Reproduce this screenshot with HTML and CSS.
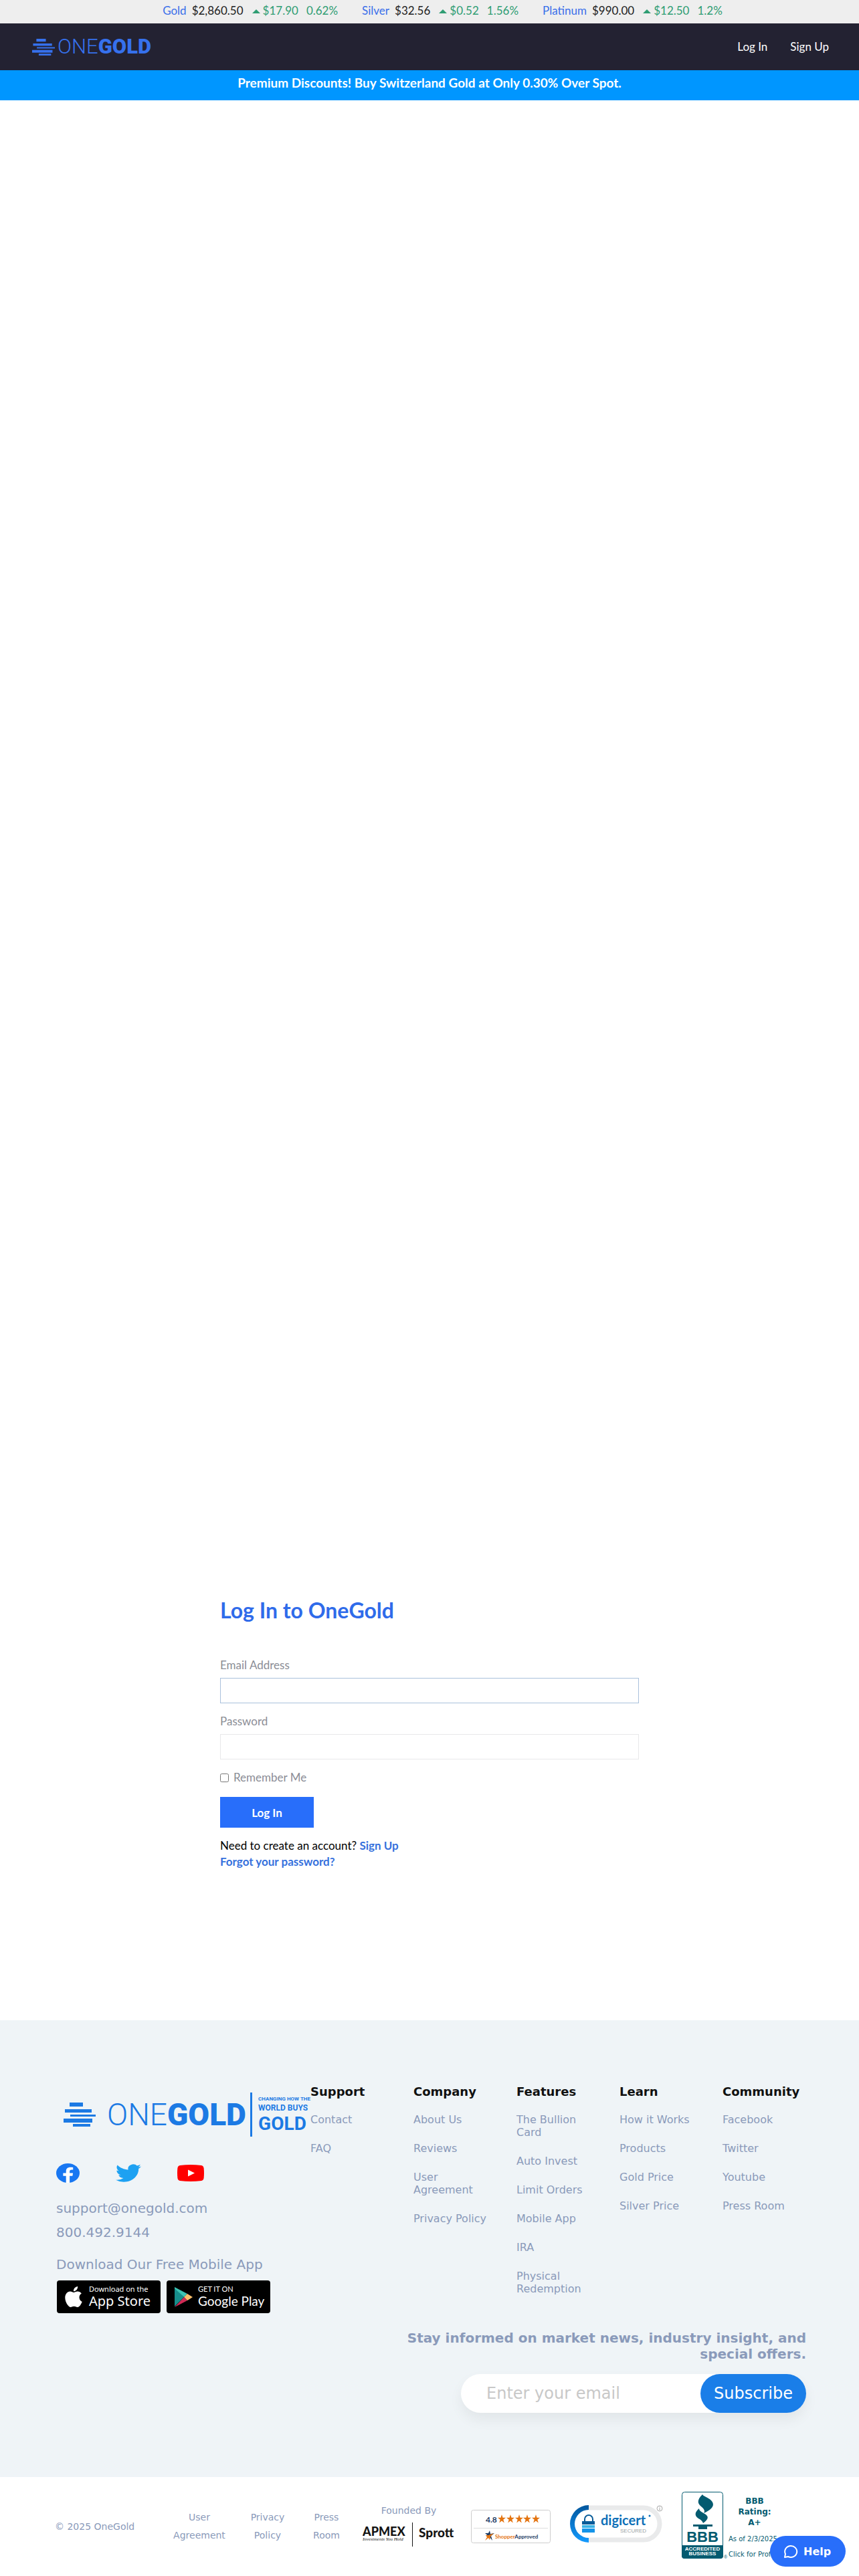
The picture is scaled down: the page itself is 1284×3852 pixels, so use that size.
FILE: index.html
```html
<!DOCTYPE html>
<html lang="en">
<head>
<meta charset="utf-8">
<meta name="viewport" content="width=device-width, initial-scale=1">
<title>Log In to OneGold</title>
<link rel="stylesheet" href="styles.css">
</head>
<body>
<div class="ticker">
  <div class="quote"><a href="#">Gold</a><span class="price">$2,860.50</span><span class="up"></span><span class="change">$17.90</span><span class="percent">0.62%</span></div>
  <div class="quote"><a href="#">Silver</a><span class="price">$32.56</span><span class="up"></span><span class="change">$0.52</span><span class="percent">1.56%</span></div>
  <div class="quote"><a href="#">Platinum</a><span class="price">$990.00</span><span class="up"></span><span class="change">$12.50</span><span class="percent">1.2%</span></div>
</div>
<header class="header">
  <a class="header-logo" href="#" aria-label="OneGold">
    <svg width="34" height="25" viewBox="0 0 48 36" preserveAspectRatio="none" fill="currentColor"><path d="M9 0h20v6H9zM2 10h40v5H2zM10 18h38v3H10zM0 24h43v6H0zM14 32h26v4H14z"/></svg>
    <span class="wordmark">ONE<b>GOLD</b></span>
  </a>
  <nav class="account"><a href="#">Log In</a><a href="#">Sign Up</a></nav>
</header>
<div class="promo">Premium Discounts! Buy Switzerland Gold at Only 0.30% Over Spot.</div>

<main class="main">
  <form class="login">
    <h1>Log In to OneGold</h1>
    <label for="email">Email Address</label>
    <input class="field field-active" id="email" type="email">
    <label for="password">Password</label>
    <input class="field" id="password" type="password">
    <div class="remember"><input id="remember" type="checkbox"><label for="remember">Remember Me</label></div>
    <button class="submit" type="button">Log In</button>
    <p>Need to create an account? <a href="#">Sign Up</a></p>
    <p><a href="#">Forgot your password?</a></p>
  </form>
</main>

<footer>
  <div class="footer">
    <div class="footer-top">
      <div class="brand">
        <div class="footer-logo">
          <svg width="48" height="36" viewBox="0 0 48 36" fill="currentColor"><path d="M9 0h20v6H9zM2 10h40v5H2zM10 18h38v3H10zM0 24h43v6H0zM14 32h26v4H14z"/></svg>
          <span class="wordmark">ONE<b>GOLD</b></span>
          <span class="tagline"><span>CHANGING HOW THE</span><span class="tag-mid">WORLD BUYS</span><span class="tag-big">GOLD</span></span>
        </div>
        <div class="social">
          <a href="#" aria-label="Facebook"><svg width="35" height="29" viewBox="0 0 24 24" preserveAspectRatio="none"><circle cx="12" cy="12" r="12" fill="#1877f2"/><path fill="#fff" d="M10.1 24v-8.4H7.1V12h3V9.4c0-3 1.8-4.7 4.5-4.7 1.3 0 2.7.2 2.7.2v3h-1.5c-1.5 0-2 .9-2 1.9V12h3.4l-.5 3.6h-2.9V24z"/></svg></a>
          <a href="#" aria-label="Twitter"><svg width="38" height="27" viewBox="0 2 24 20" preserveAspectRatio="none" fill="#1da1f2"><path d="M23.95 4.57a10 10 0 0 1-2.82.77 4.96 4.96 0 0 0 2.16-2.72c-.95.56-2 .96-3.13 1.19a4.92 4.92 0 0 0-8.38 4.48C7.69 8.1 4.07 6.13 1.64 3.16a4.9 4.9 0 0 0 1.52 6.57 4.9 4.9 0 0 1-2.23-.61v.06c0 2.38 1.7 4.37 3.95 4.82a5 5 0 0 1-2.21.09 4.94 4.94 0 0 0 4.6 3.42A9.87 9.87 0 0 1 0 19.54a14 14 0 0 0 7.55 2.21c9.05 0 14-7.5 14-13.98 0-.21 0-.42-.02-.63a9.9 9.9 0 0 0 2.42-2.57z"/></svg></a>
          <a href="#" aria-label="Youtube"><svg width="40" height="25" viewBox="0 0 40 25"><path fill="red" d="M4 1Q20-1 36 1q3 .5 3.600 4 .8 7.500 0 15-.6 3.500-3.600 4-16 2-32 0-3-.5-3.600-4-.8-7.500 0-15Q1 1.500 4 1z"/><path fill="#fff" d="M16 7.500v10l10-5z"/></svg></a>
        </div>
        <a class="contact" href="#">support@onegold.com</a>
        <a class="contact" href="#">800.492.9144</a>
        <div class="contact download">Download Our Free Mobile App</div>
        <div class="stores">
          <a class="store" href="#">
            <svg width="26" height="31" viewBox="2 0 20 24" preserveAspectRatio="none" fill="#fff"><path d="M12.150 6.900c-.95 0-2.410-1.080-3.960-1.040-2.040.03-3.910 1.180-4.960 3.010-2.120 3.670-.55 9.100 1.520 12.090 1.010 1.450 2.210 3.090 3.790 3.040 1.520-.07 2.090-.99 3.930-.99 1.830 0 2.350.99 3.960.95 1.640-.03 2.680-1.480 3.680-2.950 1.160-1.690 1.640-3.320 1.660-3.420-.04-.01-3.180-1.220-3.220-4.850-.03-3.040 2.480-4.490 2.600-4.560-1.430-2.090-3.620-2.320-4.390-2.380-2-.16-3.680 1.090-4.610 1.090zM15.530 3.830c.84-1.010 1.400-2.430 1.250-3.830-1.210.05-2.660.8-3.530 1.820-.78.9-1.450 2.340-1.270 3.710 1.340.1 2.720-.69 3.550-1.700"/></svg>
            <span class="store-text"><small>Download on the</small><span>App Store</span></span>
          </a>
          <a class="store store-play" href="#">
            <svg width="27" height="30" viewBox="0 0 27 30"><path fill="#178e8c" d="M0 1v28l14-14z"/><path fill="#3cc4b4" d="M0 0v2l14 13 5-5z"/><path fill="#fbbf6b" d="M19 10l-5 5 5 5 8-5z"/><path fill="#d02b55" d="M0 30l14-15 5 5z"/></svg>
            <span class="store-text"><small>GET IT ON</small><span>Google Play</span></span>
          </a>
        </div>
      </div>
      <nav class="links">
        <div><h2>Support</h2><a href="#">Contact</a><a href="#">FAQ</a></div>
        <div><h2>Company</h2><a href="#">About Us</a><a href="#">Reviews</a><a href="#">User Agreement</a><a href="#">Privacy Policy</a></div>
        <div><h2>Features</h2><a href="#">The Bullion Card</a><a href="#">Auto Invest</a><a href="#">Limit Orders</a><a href="#">Mobile App</a><a href="#">IRA</a><a href="#">Physical Redemption</a></div>
        <div><h2>Learn</h2><a href="#">How it Works</a><a href="#">Products</a><a href="#">Gold Price</a><a href="#">Silver Price</a></div>
        <div><h2>Community</h2><a href="#">Facebook</a><a href="#">Twitter</a><a href="#">Youtube</a><a href="#">Press Room</a></div>
      </nav>
    </div>
    <form class="newsletter">
      <label for="subscribe">Stay informed on market news, industry insight, and special offers.</label>
      <div class="subscribe"><input id="subscribe" type="email" placeholder="Enter your email"><button type="button">Subscribe</button></div>
    </form>
  </div>

  <div class="legal">
    <span class="copyright">© 2025 OneGold</span>
    <nav class="legal-links"><a href="#">User Agreement</a><a href="#">Privacy Policy</a><a href="#">Press Room</a></nav>
    <div class="founded">
      <span>Founded By</span>
      <svg width="138" height="36" viewBox="0 0 138 36" fill="#141414"><text class="lato" x="0" y="20" font-size="18" font-weight="900">APMEX</text><text class="serif" x="0" y="27" font-size="7" font-style="italic">Investments You Hold</text><path d="M74 0h1v36h-1z"/><text class="lato" x="84" y="22" font-size="19" font-weight="900">Sprott</text></svg>
    </div>
    <svg class="shopper" width="119" height="50" viewBox="0 0 119 50"><rect x=".5" y=".5" width="118" height="49" rx="3" fill="#fff" stroke="#ccc"/><path d="M4 27.500h111" stroke="#ddd"/><text class="lato" x="22" y="19" font-size="12" font-weight="700" fill="#1b3a63">4.8</text>
      <g fill="#e3730f"><path id="star" d="M46 7l1.500 4.800h4.500l-3.700 2.900 1.500 4.900-3.800-3-3.800 3 1.500-4.900-3.700-2.900h4.500z"/><use href="#star" x="13"/><use href="#star" x="26"/><use href="#star" x="38"/><use href="#star" x="51"/></g>
      <path d="M21 35h5l2-4 1 5 6-1-5 4 2 7-4-5" fill="#1b3a63"/><path d="M34 35l-8 3h-4l2 3-3 5 5-4 2 3 1-5z" fill="#e3730f"/><text class="lato" x="36" y="43" font-size="8" font-weight="700" fill="#e3730f">Shopper<tspan fill="#1b3a63">Approved</tspan></text></svg>
    <svg class="digicert" width="140" height="56" viewBox="0 0 140 56"><defs><linearGradient id="ring" x1="0" y1="0" x2="0" y2="1"><stop offset="0" stop-color="#00569c"/><stop offset="1" stop-color="#159bff"/></linearGradient></defs><path d="M28 4h82a24 24 0 0 1 0 48H28" fill="none" stroke="#e9eaeb" stroke-width="7"/><path d="M28 0v7a21 21 0 0 0 0 42v7a28 28 0 0 1 0-56z" fill="url(#ring)"/><path d="M22 24v-3a6 6 0 0 1 12 0v3" fill="none" stroke="#085b98" stroke-width="2"/><path d="M18 24h19v5H18z" fill="#085b98"/><path d="M18 30h19v4H18z" fill="#3bb3e5"/><path d="M18 35h19v6H18z" fill="#1493e8"/><text class="lato" x="46" y="30" font-size="20" font-weight="700" fill="#0e70b8">digicert</text><circle cx="119" cy="16" r="1.500" fill="#0e70b8"/><text class="arial" x="75" y="41" font-size="8" fill="#9a9fa3">SECURED</text><circle cx="134" cy="5" r="4" fill="#fff" stroke="#aaa"/><path d="M134 4.500v3M134 2.500v1" stroke="#999"/></svg>
    <div class="bbb">
      <svg width="70" height="102" viewBox="0 0 70 102" fill="#045b70"><rect x=".5" y=".5" width="61" height="99" rx="4" fill="#fff" stroke="#045b70"/><path d="M31 4c-8 8-8 13-2 18 5 4 6 7 4 10 14-6 17-13 11-19-5-5-12-6-13-9zM26 25c-7 6-7 11-1 15 4 2 6 4 7 7 7-5 9-9 4-13-6-4-10-5-10-9zM17 49h29v3h-8v4H25v-4h-8zM0 80h62v16q0 4-4 4H4q-4 0-4-4z"/><text class="arial" x="31" y="75" font-size="22" font-weight="700" text-anchor="middle">BBB</text><g fill="#fff" font-size="8" font-weight="700" text-anchor="middle"><text class="arial" x="31" y="88">ACCREDITED</text><text class="arial" x="31" y="95">BUSINESS</text></g><text class="arial" x="63" y="100" font-size="7">®</text></svg>
      <div class="rating"><b>BBB Rating: A+</b><span>As of 2/3/2025</span><span>Click for Profile</span></div>
    </div>
  </div>
</footer>
<button class="help" type="button"><svg width="22" height="22" viewBox="0 0 22 22" fill="none" stroke="#fff" stroke-width="2" stroke-linejoin="round"><path d="M2 20l1-5a9 8.500 0 1 1 4 4z"/></svg>Help</button>
</body>
</html>
```
FILE: styles.css
```css
* { box-sizing: border-box; }
body { margin: 0; min-height: 100vh; display: flex; flex-direction: column; background: #fff; color: #111; font: 17px/24px Lato, sans-serif; }
a { text-decoration: none; color: inherit; }
button { border: 0; font-family: inherit; cursor: pointer; }
svg { display: block; flex: none; }
.lato { font-family: Lato, sans-serif; }
.serif { font-family: "Liberation Serif", serif; }
.arial { font-family: "Liberation Sans", sans-serif; }

.ticker { display: flex; justify-content: center; gap: 36px; height: 35px; padding: 4px 0 0 39px; background: #eee; color: #222; white-space: nowrap; }
.quote { display: flex; align-items: center; height: 24px; }
.quote a { margin-right: 8px; color: #3a6fea; }
.up { margin: 2px 4px 0 13px; border: 6px solid transparent; border-top: 0; border-bottom: 6px solid #2f9d73; }
.change, .percent { color: #2f9d73; }
.percent { margin-left: 12px; }

.header { display: flex; align-items: center; justify-content: space-between; height: 70px; padding: 0 45px 0 48px; background: #232232; color: #fff; }
.header-logo { display: flex; align-items: center; gap: 4px; color: #3671ed; }
.wordmark { font-family: Roboto, sans-serif; font-size: 31px; font-weight: 300; line-height: 40px; white-space: nowrap; }
.wordmark b { font-weight: 900; }
.account { display: flex; gap: 34px; }
.promo { height: 45px; padding-top: 7px; background: #0096ff; color: #fff; font-size: 19px; font-weight: 700; text-align: center; }

.main { flex: 1; display: flex; flex-direction: column; justify-content: flex-end; align-items: center; padding: 48px 24px 225px; }
.login { display: flex; flex-direction: column; width: 100%; max-width: 626px; color: #000; }
.login h1 { margin: 0 0 50px; color: #2f6bea; font-size: 32px; line-height: 40px; }
.login label { color: #8b8d96; }
.field { height: 38px; margin: 7px 0 15px; padding: 0 10px; border: 1px solid #e8e8ea; background: #fff; font: inherit; }
.field-active { border-color: #a9c0dc; outline: 0; }
.remember { display: flex; align-items: center; gap: 7px; margin: 0 0 17px; }
.remember input { width: 13px; height: 13px; margin: 1px 0 0; }
.submit { width: 140px; height: 46px; margin-bottom: 15px; background: #286efa; color: #fff; font-size: 17px; font-weight: 700; }
.login p { margin: 0; }
.login p a { color: #3671dd; font-weight: 700; }

.footer { padding: 96px 50px 96px 84px; background: #eff4f7; color: #8a9aba; font-family: "DejaVu Sans", sans-serif; }
.footer-top { display: flex; align-items: flex-start; }
.brand { flex: 0 0 380px; min-width: 0; }
.footer-logo { display: flex; align-items: center; height: 90px; padding-left: 11px; color: #1c7ae4; }
.footer-logo .wordmark { margin-left: 17px; font-size: 46px; line-height: 57px; }
.tagline { display: flex; flex-direction: column; justify-content: center; height: 66px; margin-left: auto; padding-left: 9px; border-left: 3px solid; font: 700 8px/12px Roboto, sans-serif; white-space: nowrap; }
.tag-mid { font-size: 12px; line-height: 15px; }
.tag-big { font-size: 28px; line-height: 32px; }
.social { display: flex; align-items: center; height: 30px; margin-top: 27px; }
.social a + a { margin-left: 54px; }
.contact { display: block; margin-top: 12px; font-size: 20px; line-height: 24px; }
.social + .contact { margin-top: 26px; }
.download { margin-top: 24px; }
.stores { display: flex; gap: 9px; margin: 12px 0 0 1px; }
.store { display: flex; align-items: center; gap: 10px; width: 155px; height: 49px; padding-left: 12px; border-radius: 4px; background: #000; color: #fff; }
.store-play { gap: 8px; }
.store-text { display: flex; flex-direction: column; font: 20px/24px "Noto Sans", sans-serif; white-space: nowrap; }
.store-text small { font-size: 11px; line-height: 12px; }
.store-play .store-text { font-family: Lato, sans-serif; font-size: 19px; }
.links { flex: 1; display: grid; grid-template-columns: repeat(5, 1fr); font-size: 16px; line-height: 19px; }
.links div { display: flex; flex-direction: column; gap: 24px; min-width: 0; padding-right: 40px; }
.links h2 { margin: 0 0 -3px; color: #111; font-size: 18px; line-height: 22px; }
.newsletter { width: 610px; max-width: 100%; margin: 25px 29px 0 auto; text-align: right; }
.newsletter label { display: block; font-size: 20px; font-weight: 700; line-height: 24px; }
.subscribe { display: flex; width: 516px; max-width: 100%; height: 58px; margin: 18px 0 0 auto; border-radius: 29px; background: #fff; box-shadow: 0 10px 20px rgba(0, 0, 0, .06); }
.subscribe input { flex: 1; min-width: 0; padding: 0 38px; border: 0; outline: 0; background: none; font: 24px "DejaVu Sans", sans-serif; }
.subscribe input::placeholder { color: #c8c8c8; }
.subscribe button { width: 158px; padding: 0; border-radius: 29px; background: #1a7ee8; color: #fff; font-size: 24px; }

.legal { display: flex; align-items: center; height: 148px; padding-left: 82px; color: #8a9aba; font: 14px/27px "DejaVu Sans", sans-serif; }
.copyright { width: 163px; white-space: nowrap; }
.legal-links { display: flex; gap: 10px; text-align: center; }
.legal-links a { width: 78px; }
.legal-links a:first-child { width: 106px; }
.founded { display: flex; flex-direction: column; align-items: center; gap: 4px; margin: -8px 24px 0 15px; }
.shopper { margin-right: 29px; }
.digicert { margin: -8px 27px 0 0; }
.bbb { display: flex; align-items: flex-start; color: #045b70; }
.rating { display: flex; flex-direction: column; width: 90px; padding-top: 6px; font-size: 10px; line-height: 23px; white-space: nowrap; }
.rating b { width: 60px; margin: 0 0 5px 9px; font-size: 12px; line-height: 16px; text-align: center; white-space: normal; }
.help { position: fixed; right: 20px; bottom: 14px; display: flex; align-items: center; gap: 8px; width: 113px; height: 46px; padding: 0 0 0 20px; border-radius: 23px; background: #286efa; color: #fff; font: 700 16px "DejaVu Sans", sans-serif; }
```
